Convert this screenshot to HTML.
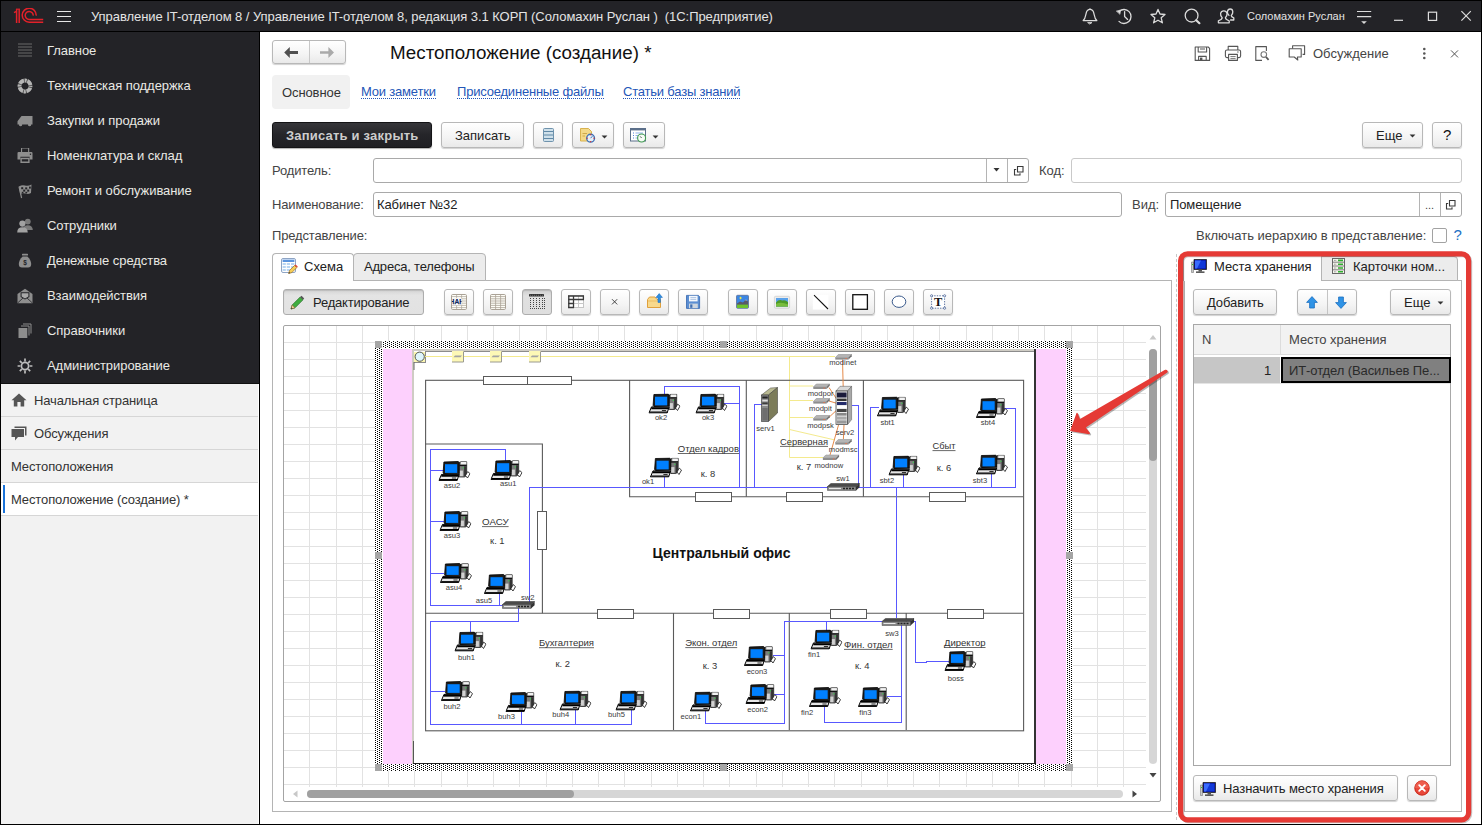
<!DOCTYPE html>
<html><head><meta charset="utf-8">
<style>
*{box-sizing:border-box;margin:0;padding:0}
html,body{width:1482px;height:825px;overflow:hidden;background:#fff}
body{font-family:"Liberation Sans",sans-serif;font-size:13px;color:#333;position:relative}
.a{position:absolute}
.t{position:absolute;white-space:nowrap;line-height:1}
#top{left:0;top:0;width:1482px;height:32px;background:#232327;border-bottom:1px solid #000}
#side{left:0;top:32px;width:260px;height:352px;background:#232327}
#side2{left:0;top:384px;width:258px;height:441px;background:#f2f2f2}
.mi{position:absolute;left:47px;color:#e9e9e4;font-size:13px;white-space:nowrap;line-height:1;letter-spacing:-0.06px}
.pi{position:absolute;left:0;width:258px;height:33px;border-bottom:1px solid #d6d6d6;font-size:13px;color:#333}
.pi span{position:absolute;top:10px;white-space:nowrap;line-height:1;letter-spacing:-0.12px}
.btn{position:absolute;border:1px solid #b8b8b8;border-radius:3px;background:linear-gradient(#ffffff,#f4f4f4 60%,#e9e9e9);box-shadow:0 1px 1px rgba(0,0,0,.18)}
.inp{position:absolute;border:1px solid #a9a9a9;border-radius:3px;background:#fff}
.lbl{position:absolute;font-size:13px;color:#444;white-space:nowrap;line-height:1}
.lnk{position:absolute;font-size:13px;color:#2456b8;white-space:nowrap;line-height:12px;height:13px;border-bottom:1px dotted #2456b8;padding-bottom:0;letter-spacing:-0.2px}
</style></head><body>
<!-- TOPBAR -->
<div id="top" class="a"></div>

<svg class="a" style="left:13px;top:8px" width="32" height="16" viewBox="0 0 32 16">
 <g fill="none" stroke="#e3212a" stroke-width="1.5">
  <path d="M1 4.6 L3.4 3.4 M3.6 1.2 V15 M6.2 1.2 V15"/>
  <path d="M23.2 7.6 A7 7 0 1 0 16.2 14.2 H30.2"/>
  <path d="M20.2 7.6 A4 4 0 1 0 16.2 11.4 H30.2"/>
 </g>
 <path d="M3 1.2 H7" stroke="#e3212a" stroke-width="1.2"/>
</svg>
<div class="a" style="left:57px;top:11px;width:14px;height:1.4px;background:#e6e6e6"></div>
<div class="a" style="left:57px;top:16px;width:14px;height:1.4px;background:#e6e6e6"></div>
<div class="a" style="left:57px;top:21px;width:14px;height:1.4px;background:#e6e6e6"></div>
<div class="t" id="ttl" style="left:91px;top:10px;font-size:13px;color:#e4e4e4;letter-spacing:-0.06px">Управление IT-отделом 8 / Управление IT-отделом 8, редакция 3.1 КОРП (Соломахин Руслан )&nbsp; (1С:Предприятие)</div>
<div class="t" id="usr" style="left:1247px;top:11px;font-size:11px;color:#e4e4e4">Соломахин Руслан</div>

<!-- TOP RIGHT ICONS -->
<svg class="a" style="left:1080px;top:6px" width="160" height="22" viewBox="1080 6 160 22" fill="none" stroke="#dcdcdc" stroke-width="1.3" stroke-linejoin="round" stroke-linecap="round">
<path d="M1083.2 20.6 C1086.4 18 1085.2 12.6 1087.4 10.4 Q1090 8.2 1092.6 10.4 C1094.8 12.6 1093.6 18 1096.8 20.6 Z"/><path d="M1090 8.8 V9.4"/><path d="M1088 22.6 H1092 L1090 23.8 Z" fill="#dcdcdc" stroke-width="0.8"/>
<path d="M1119.2 11.4 A7 7 0 1 1 1119 21.4"/><path d="M1124.6 11.6 V16.6 L1127.6 19.4"/><path d="M1116.6 11 L1120.6 10 L1120 14 Z" fill="#dcdcdc" stroke-width="0.6"/>
<path d="M1158 9.4 L1160 14 L1165 14.5 L1161.2 17.8 L1162.4 22.8 L1158 20.2 L1153.6 22.8 L1154.8 17.8 L1151 14.5 L1156 14 Z"/>
<circle cx="1191.6" cy="15.6" r="6.4"/><path d="M1196.2 20.2 L1199.4 23.2" stroke-width="2.2"/>
<path d="M1229 15.4 Q1227 13.4 1227.4 11.6 Q1228 9 1230.2 9 Q1232.6 9 1232.8 11.8 Q1233 13.6 1231.2 15.6 Q1231.2 17 1233.8 17.8 L1233.8 20 H1230.6"/>
<path d="M1218.4 22.8 V20.8 Q1222.2 19.6 1222.2 17.6 Q1220.2 15.6 1220.6 13.4 Q1221.2 10.8 1223.8 10.8 Q1226.4 10.8 1227 13.4 Q1227.4 15.6 1225.4 17.6 Q1225.4 19.6 1229.2 20.8 V22.8 Z" fill="#232327"/>
</svg>
<svg class="a" style="left:1355px;top:6px" width="120" height="22" viewBox="1355 6 120 22" fill="none" stroke="#dcdcdc" stroke-width="1.2">
<path d="M1357 11.5 H1371.2 M1357 16.6 H1371.2"/><path d="M1361.2 21.2 H1366.8 L1364 24 Z" fill="#dcdcdc" stroke="none"/>
<path d="M1394 20.3 H1403"/>
<rect x="1428.4" y="12.2" width="8.2" height="8.2"/>
<path d="M1461.4 11.2 L1470.8 20.6 M1470.8 11.2 L1461.4 20.6"/>
</svg>
<svg class="a" style="left:1190px;top:42px" width="280" height="22" viewBox="1190 42 280 22" fill="none" stroke="#555" stroke-width="1.1" stroke-linejoin="round">
<path d="M1195.2 47 H1208.2 L1209.6 48.4 V60.4 H1195.2 Z"/><path d="M1198.2 47 V52 H1206.6 V47 M1200 49 H1205 M1198.6 60.4 V56.4 H1206.2 V60.4"/><rect x="1200" y="57.6" width="2.4" height="2.8" fill="#555" stroke="none"/>
<path d="M1228.2 50 V46.4 H1237.8 V50"/><rect x="1225.4" y="50" width="15.2" height="7.6" rx="1.6"/><rect x="1228.6" y="54.4" width="8.8" height="6" fill="#fff"/><path d="M1230.4 56.6 H1235.6 M1230.4 58.6 H1235.6" stroke-width="0.8"/><path d="M1237.2 52 H1238.6" stroke-width="1"/>
<path d="M1266.4 51 V46.6 H1255.8 V60.4 H1262"/><circle cx="1263.8" cy="54.6" r="2.8" stroke="#777"/><path d="M1266 57 L1268.6 59.8" stroke-width="1.8"/>
<path d="M1292.6 48.8 V45.8 H1304.6 V54.4 H1302.6"/><path d="M1289.2 48.8 H1301.2 V57 H1297.4 L1297.8 60 L1294.2 57 H1289.2 Z" fill="#fff"/>
<g fill="#555" stroke="none"><circle cx="1424.3" cy="49" r="1.3"/><circle cx="1424.3" cy="53.5" r="1.3"/><circle cx="1424.3" cy="58" r="1.3"/></g>
<path d="M1451 50.4 L1458 57.4 M1458 50.4 L1451 57.4" stroke-width="1"/>
</svg>
<div class="t" style="left:1313px;top:47px;font-size:13px;color:#444;letter-spacing:0px">Обсуждение</div>
<div id="side" class="a"></div>
<div id="side2" class="a"></div>
<svg class="a" style="left:17px;top:42.5px" width="16" height="16" viewBox="0 0 16 16"><g fill="#7a7a7a"><rect x="1" y="0.6" width="14" height="0.8"/><rect x="1" y="3.6" width="14" height="0.8"/><rect x="1" y="6.6" width="14" height="0.8"/><rect x="1" y="9.6" width="14" height="0.8"/><rect x="1" y="12.6" width="14" height="0.8"/></g></svg>
<div class="mi" style="top:43.5px">Главное</div>
<svg class="a" style="left:17px;top:77.5px" width="16" height="16" viewBox="0 0 16 16"><circle cx="8" cy="8" r="5.5" fill="none" stroke="#4a4a4a" stroke-width="3.8"/><circle cx="8" cy="8" r="5.5" fill="none" stroke="#b4b4b4" stroke-width="3.8" stroke-dasharray="2 0.8 5.04 0.8" stroke-dashoffset="1"/></svg>
<div class="mi" style="top:78.5px">Техническая поддержка</div>
<svg class="a" style="left:17px;top:112.5px" width="16" height="16" viewBox="0 0 16 16"><path d="M4.5 3 H15.5 V11.5 H14.2 A1.6 1.6 0 0 1 11 11.5 H5.2 A1.6 1.6 0 0 1 2 11.5 H0.5 V8.2 Z" fill="#8e8e8e"/><circle cx="3.6" cy="12" r="1.2" fill="#8e8e8e"/><circle cx="12.6" cy="12" r="1.2" fill="#8e8e8e"/></svg>
<div class="mi" style="top:113.5px">Закупки и продажи</div>
<svg class="a" style="left:17px;top:147.5px" width="16" height="16" viewBox="0 0 16 16"><path d="M4 -0.5 H12.2 V4 H4 Z M5.1 0.6 V4 H11.1 V0.6 Z" fill="#8e8e8e" fill-rule="evenodd"/><path d="M1.6 4 H14.4 A1.1 1.1 0 0 1 15.5 5.1 V11.4 H12.6 V8.8 H3.4 V11.4 H0.5 V5.1 A1.1 1.1 0 0 1 1.6 4 Z" fill="#8e8e8e"/><rect x="12.8" y="5.6" width="1.3" height="1.3" fill="#232327"/><path d="M3.4 9.8 H12.6 V15 H3.4 Z M4.8 11.2 V13.6 H11.2 V11.2 Z" fill="#8e8e8e" fill-rule="evenodd"/></svg>
<div class="mi" style="top:148.5px">Номенклатура и склад</div>
<svg class="a" style="left:17px;top:182.5px" width="16" height="16" viewBox="0 0 16 16"><path d="M2 3.5 Q5 1.5 8 2.5 T14.5 1.5 L14 10 Q11 11.5 8 10.5 T3.2 11.5 Z" fill="#8e8e8e"/><path d="M2 3.5 L4.6 15" stroke="#8e8e8e" stroke-width="1.2" fill="none"/><g fill="#232327"><rect x="4.2" y="4.2" width="2" height="2"/><rect x="8.2" y="4.4" width="2" height="2"/><rect x="12" y="3.6" width="1.8" height="2"/><rect x="6.2" y="6.6" width="2" height="2"/><rect x="10.2" y="6.6" width="2" height="2"/><rect x="4.8" y="8.8" width="1.6" height="1.6"/><rect x="8.4" y="8.8" width="1.8" height="1.6"/></g></svg>
<div class="mi" style="top:183.5px">Ремонт и обслуживание</div>
<svg class="a" style="left:17px;top:217.5px" width="16" height="16" viewBox="0 0 16 16"><circle cx="10.8" cy="3.6" r="2.9" fill="#7a7a7a"/><path d="M6 12 Q6 7.2 10.8 7.2 T15.8 12 Z" fill="#7a7a7a"/><circle cx="5.4" cy="5.6" r="3.1" fill="#a2a2a2"/><path d="M0.2 14.5 Q0.2 9.2 5.4 9.2 T10.8 14.5 Z" fill="#a2a2a2"/></svg>
<div class="mi" style="top:218.5px">Сотрудники</div>
<svg class="a" style="left:17px;top:252.5px" width="16" height="16" viewBox="0 0 16 16"><rect x="5" y="0.8" width="6" height="1.8" rx="0.6" fill="#8e8e8e"/><path d="M5.6 3.4 H10.4 Q14.2 7 14.2 11 Q14.2 14.6 11 14.6 H5 Q1.8 14.6 1.8 11 Q1.8 7 5.6 3.4 Z" fill="#8e8e8e"/><text x="8" y="12.2" font-size="6.5" font-weight="bold" text-anchor="middle" fill="#232327" font-family="Liberation Sans">$</text></svg>
<div class="mi" style="top:253.5px">Денежные средства</div>
<svg class="a" style="left:17px;top:287.5px" width="16" height="16" viewBox="0 0 16 16"><path d="M0.5 6 L8 0.8 L15.5 6 V15.2 H0.5 Z" fill="#8e8e8e"/><path d="M3.6 4.2 H12.4 V9 L8 11.6 L3.6 9 Z" fill="#232327"/><path d="M4.6 5.2 H11.4 V8.4 L8 10.4 L4.6 8.4 Z" fill="#a8a8a8"/><path d="M0.8 14.8 L6 10 M15.2 14.8 L10 10" stroke="#232327" stroke-width="0.8"/></svg>
<div class="mi" style="top:288.5px">Взаимодействия</div>
<svg class="a" style="left:17px;top:322.5px" width="16" height="16" viewBox="0 0 16 16"><path d="M6 1 H14 V10.5 M4 3 H12 V12.5" fill="none" stroke="#8e8e8e" stroke-width="1"/><rect x="1.5" y="5" width="8.8" height="10" fill="#8e8e8e"/></svg>
<div class="mi" style="top:323.5px">Справочники</div>
<svg class="a" style="left:17px;top:357.5px" width="16" height="16" viewBox="0 0 16 16"><g stroke="#bdbdbd" stroke-width="1.7" fill="none"><circle cx="8" cy="8" r="3.6"/><path d="M8 0.6 V3.4 M8 12.6 V15.4 M0.6 8 H3.4 M12.6 8 H15.4 M2.8 2.8 L4.8 4.8 M11.2 11.2 L13.2 13.2 M2.8 13.2 L4.8 11.2 M11.2 4.8 L13.2 2.8"/></g></svg>
<div class="mi" style="top:358.5px">Администрирование</div>
<div class="pi" style="top:384px"><svg class="a" style="left:11px;top:9px" width="16" height="14" viewBox="0 0 16 14"><path d="M8 0.5 L15.5 7.2 H13.2 V13.5 H9.6 V9 H6.4 V13.5 H2.8 V7.2 H0.5 Z" fill="#555"/></svg><span style="left:34px">Начальная страница</span></div>
<div class="pi" style="top:417px"><svg class="a" style="left:11px;top:9px" width="16" height="15" viewBox="0 0 16 15"><path d="M3.5 0.5 H15.5 V9.5 H14 V2 H3.5 Z" fill="#555"/><path d="M0.5 3 H13 V11 H7 L4 14.5 V11 H0.5 Z" fill="#555"/></svg><span style="left:34px">Обсуждения</span></div>
<div class="pi" style="top:450px"><span style="left:11px">Местоположения</span></div>
<div class="pi" style="top:483px;background:#fff"><div class="a" style="left:3px;top:2px;width:2px;height:28px;background:#1a73d9"></div><span style="left:11px">Местоположение (создание) *</span></div>

<!-- HEADER -->
<div class="btn" style="left:272px;top:40px;width:74px;height:24px"></div>
<div class="a" style="left:309px;top:41px;width:1px;height:22px;background:#c8c8c8"></div>
<svg class="a" style="left:284px;top:46px" width="15" height="13" viewBox="0 0 15 13"><path d="M0.2 6.5 L5.8 1.1 V5.1 H14 V7.9 H5.8 V11.9 Z" fill="#505050"/></svg>
<svg class="a" style="left:320px;top:46px" width="15" height="13" viewBox="0 0 15 13"><path d="M14 6.5 L8.4 1.1 V5.3 H0 V7.7 H8.4 V11.9 Z" fill="#aaaaaa"/></svg>
<div class="t" id="h1" style="left:390px;top:44px;font-size:18.8px;color:#111">Местоположение (создание) *</div>
<div class="a" style="left:272px;top:75px;width:78px;height:34px;background:#f1f1f1;border-radius:4px"></div>
<div class="t" style="left:282px;top:86px;font-size:13px;color:#333;letter-spacing:-0.1px">Основное</div>
<div class="lnk" style="left:361px;top:86px">Мои заметки</div>
<div class="lnk" style="left:457px;top:86px">Присоединенные файлы</div>
<div class="lnk" style="left:623px;top:86px">Статьи базы знаний</div>
<!-- cmd bar -->
<div class="a" style="left:272px;top:122px;width:160px;height:26px;border-radius:3px;background:linear-gradient(#36363a,#252529 50%,#1f1f23);border:1px solid #141416;box-shadow:0 1px 1px rgba(0,0,0,.3)"></div>
<div class="t" style="left:286px;top:129px;font-size:13px;font-weight:bold;color:#cdcdcd;letter-spacing:0.2px">Записать и закрыть</div>
<div class="btn" style="left:441px;top:122px;width:83px;height:26px"></div>
<div class="t" style="left:455px;top:129px;font-size:13px;color:#222">Записать</div>
<div class="btn" style="left:533px;top:122px;width:30px;height:26px"></div>
<svg class="a" style="left:543px;top:128px" width="11" height="14" viewBox="0 0 11 14"><rect x="0.5" y="0.5" width="10" height="13" rx="1" fill="#cfe0ea" stroke="#6f93ad"/><path d="M1 3.5 H10 M1 7 H10 M1 10.5 H10" stroke="#5f88a6" stroke-width="1.2"/></svg>
<div class="btn" style="left:572px;top:122px;width:42px;height:26px"></div>
<svg class="a" style="left:579px;top:127px" width="17" height="16" viewBox="0 0 17 16"><path d="M1.5 1.5 H9.5 L12.5 4.5 V14 H1.5 Z" fill="#f3d989" stroke="#d8b24f"/><path d="M3.5 6.5 H8 M3.5 9 H6" stroke="#cfa94a" stroke-width="1"/><circle cx="11.6" cy="11.2" r="3.9" fill="#e8f0f8" stroke="#3f73b8" stroke-width="1.4"/><path d="M11.6 11.2 L13.4 9.2" stroke="#3f73b8" stroke-width="1"/><g fill="#e8241c"><rect x="11.1" y="7.2" width="1.1" height="1.1"/><rect x="11.1" y="14.1" width="1.1" height="1.1"/><rect x="7.6" y="10.7" width="1.1" height="1.1"/><rect x="14.5" y="10.7" width="1.1" height="1.1"/></g></svg>
<svg class="a" style="left:601px;top:135px" width="7" height="4" viewBox="0 0 7 4"><path d="M0.6 0.4 H6.4 L3.5 3.4 Z" fill="#333"/></svg>
<div class="btn" style="left:623px;top:122px;width:42px;height:26px"></div>
<svg class="a" style="left:629px;top:127px" width="19" height="16" viewBox="0 0 19 16"><rect x="1.5" y="1.5" width="15" height="12.5" fill="#fff" stroke="#5b6f8a"/><rect x="1" y="1" width="16" height="2.4" fill="#5b6f8a"/><path d="M4 6 H5 M4 8.5 H5 M4 11 H5" stroke="#4f81d6" stroke-width="1"/><path d="M6.5 6 H14 M6.5 8.5 H12 M6.5 11 H10" stroke="#8fb2ea" stroke-width="1"/><circle cx="12.6" cy="11" r="4" fill="#f6fcf6" stroke="#3f9a4f" stroke-width="1.1"/><path d="M12.6 11 L11.2 9.4" stroke="#555" stroke-width="1"/></svg>
<svg class="a" style="left:652px;top:135px" width="7" height="4" viewBox="0 0 7 4"><path d="M0.6 0.4 H6.4 L3.5 3.4 Z" fill="#333"/></svg>
<div class="btn" style="left:1362px;top:122px;width:61px;height:26px"></div>
<div class="t" style="left:1376px;top:129px;font-size:13px;color:#222">Еще</div>
<svg class="a" style="left:1409px;top:134px" width="7" height="4" viewBox="0 0 7 4"><path d="M0.6 0.4 H6.4 L3.5 3.4 Z" fill="#333"/></svg>
<div class="btn" style="left:1432px;top:122px;width:30px;height:26px"></div>
<div class="t" style="left:1443px;top:127px;font-size:15px;color:#111">?</div>
<!-- FORM -->
<div class="lbl" style="left:272px;top:164px;letter-spacing:-0.15px">Родитель:</div>
<div class="inp" style="left:373px;top:158px;width:656px;height:25px"></div>
<div class="a" style="left:986px;top:159px;width:1px;height:23px;background:#b4b4b4"></div>
<div class="a" style="left:1007px;top:159px;width:1px;height:23px;background:#b4b4b4"></div>
<svg class="a" style="left:993px;top:168px" width="7" height="4" viewBox="0 0 7 4"><path d="M0.5 0 H6.5 L3.5 3.4 Z" fill="#333"/></svg>
<svg class="a open" style="left:1013px;top:165px" width="11" height="11" viewBox="0 0 11 11"><path d="M4.5 1.5 H10 V7 H4.5 Z M3.2 4.5 H1.5 V10 H7 V8.3" fill="none" stroke="#3a3a3a" stroke-width="1.1"/></svg>
<div class="lbl" style="left:1039px;top:164px">Код:</div>
<div class="inp" style="left:1071px;top:158px;width:391px;height:25px;border-color:#c9c9c9"></div>
<div class="lbl" style="left:272px;top:198px;letter-spacing:-0.15px">Наименование:</div>
<div class="inp" style="left:373px;top:192px;width:749px;height:25px"></div>
<div class="t" style="left:377px;top:198px;font-size:13px;color:#222;letter-spacing:-0.1px">Кабинет №32</div>
<div class="lbl" style="left:1132px;top:198px">Вид:</div>
<div class="inp" style="left:1165px;top:192px;width:297px;height:25px"></div>
<div class="t" style="left:1170px;top:198px;font-size:13px;color:#222;letter-spacing:-0.1px">Помещение</div>
<div class="a" style="left:1419px;top:193px;width:1px;height:23px;background:#b4b4b4"></div>
<div class="a" style="left:1440px;top:193px;width:1px;height:23px;background:#b4b4b4"></div>
<div class="t" style="left:1425px;top:200px;font-size:11px;color:#444">...</div>
<svg class="a open" style="left:1445px;top:199px" width="11" height="11" viewBox="0 0 11 11"><path d="M4.5 1.5 H10 V7 H4.5 Z M3.2 4.5 H1.5 V10 H7 V8.3" fill="none" stroke="#3a3a3a" stroke-width="1.1"/></svg>
<div class="lbl" style="left:272px;top:229px;letter-spacing:-0.15px">Представление:</div>
<div class="lbl" style="left:1196px;top:229px">Включать иерархию в представление:</div>
<div class="a" style="left:1432px;top:228px;width:15px;height:15px;border:1px solid #a2a2a2;border-radius:2px;background:#fff"></div>
<div class="t" style="left:1453.5px;top:227px;font-size:15px;color:#1c6fc4">?</div>

<!-- TABS -->
<div class="a" style="left:272px;top:280px;width:900px;height:532px;border:1px solid #b4b4b4;background:#fff"></div>
<div class="a" style="left:353px;top:253px;width:133px;height:28px;border:1px solid #b4b4b4;border-radius:4px 4px 0 0;background:#ececec"></div>
<div class="a" style="left:272px;top:253px;width:82px;height:28px;border:1px solid #b4b4b4;border-bottom:none;border-radius:4px 4px 0 0;background:#fff"></div>
<svg class="a" style="left:281px;top:258px" width="17" height="16" viewBox="0 0 17 16"><rect x="0.5" y="0.5" width="14" height="14" rx="1.5" fill="#fff" stroke="#8ea4c4"/><rect x="1.6" y="1.6" width="11.8" height="2.4" fill="#5a94de"/><g fill="#b9d6f3"><rect x="1.6" y="5" width="3.2" height="2"/><rect x="5.8" y="5" width="3.2" height="2"/><rect x="10" y="5" width="3.4" height="2"/><rect x="1.6" y="8" width="3.2" height="2"/><rect x="5.8" y="8" width="3.2" height="2"/><rect x="10" y="8" width="3.4" height="2"/><rect x="1.6" y="11" width="3.2" height="2"/><rect x="5.8" y="11" width="3.2" height="2"/></g><path d="M7.6 15.6 L8.6 12.4 L13.6 7.4 L15.8 9.6 L10.8 14.6 Z" fill="#f6cf58" stroke="#9a6a1e" stroke-width="0.7"/><path d="M13.6 7.4 L14.6 6.4 L16.8 8.6 L15.8 9.6 Z" fill="#e2443a"/><path d="M7.6 15.6 L8.1 14 L9.2 15.1 Z" fill="#333"/></svg>
<div class="t" style="left:304px;top:260px;font-size:13px;color:#222">Схема</div>
<div class="t" style="left:364px;top:260px;font-size:13px;color:#222;letter-spacing:-0.2px">Адреса, телефоны</div>
<div class="btn" style="left:283px;top:289px;width:141px;height:26px;background:linear-gradient(#d4d4d4,#e4e4e4 22%,#e2e2e2);box-shadow:inset 0 1px 1px rgba(0,0,0,.12);border-color:#adadad"></div>
<svg class="a" style="left:290px;top:295px" width="15" height="15" viewBox="0 0 15 15"><path d="M1 14 L2.2 10 L10.2 2 L13 4.8 L5 12.8 Z" fill="#3fae3f" stroke="#2a6f2a" stroke-width="0.7"/><path d="M10.2 2 L11.6 0.8 L14.2 3.4 L13 4.8 Z" fill="#555"/><path d="M1 14 L2.2 10 L5 12.8 Z" fill="#f2d2a0" stroke="#8a5a2a" stroke-width="0.6"/><path d="M1 14 L1.5 12.4 L2.6 13.5 Z" fill="#333"/></svg>
<div class="t" style="left:313px;top:296px;font-size:13px;color:#222;letter-spacing:-0.2px">Редактирование</div>
<div class="btn" style="left:444px;top:289px;width:30px;height:26px;"></div>
<div class="btn" style="left:483px;top:289px;width:30px;height:26px;"></div>
<div class="btn" style="left:522px;top:289px;width:30px;height:26px;background:linear-gradient(#cfcfcf,#e0e0e0 25%,#dedede);box-shadow:inset 0 1px 1px rgba(0,0,0,.12);border-color:#adadad;"></div>
<div class="btn" style="left:561px;top:289px;width:30px;height:26px;"></div>
<div class="btn" style="left:600px;top:289px;width:30px;height:26px;"></div>
<div class="btn" style="left:639px;top:289px;width:30px;height:26px;"></div>
<div class="btn" style="left:678px;top:289px;width:30px;height:26px;"></div>
<div class="btn" style="left:728px;top:289px;width:30px;height:26px;"></div>
<div class="btn" style="left:767px;top:289px;width:30px;height:26px;"></div>
<div class="btn" style="left:806px;top:289px;width:30px;height:26px;"></div>
<div class="btn" style="left:845px;top:289px;width:30px;height:26px;"></div>
<div class="btn" style="left:884px;top:289px;width:30px;height:26px;"></div>
<div class="btn" style="left:923px;top:289px;width:30px;height:26px;"></div>
<svg class="a" style="left:440px;top:286px" width="520" height="32" viewBox="440 286 520 32">
<!-- 1 -->
<rect x="451.5" y="294.5" width="15" height="15" rx="1.2" fill="#fffef8" stroke="#aaa296"/>
<path d="M452 296.6 H466 M452 298.8 H466 M452 301 H466 M452 303.2 H466 M452 305.4 H466 M452 307.6 H466 M456.6 295 V309 M461.6 295 V309" stroke="#aaa296" stroke-width="0.7" fill="none"/>
<rect x="452" y="298.2" width="9.6" height="7" fill="#fff"/>
<clipPath id="cpH"><rect x="452" y="297" width="9.4" height="9"/></clipPath><text x="449.6" y="304.4" font-size="7.6" font-weight="bold" fill="#10285e" stroke="#10285e" stroke-width="0.25" font-family="Liberation Sans" clip-path="url(#cpH)" textLength="14.4" lengthAdjust="spacingAndGlyphs">НАН</text>
<rect x="461.6" y="297" width="6" height="10" fill="#fffef8" opacity="0"/>
<!-- 2 -->
<rect x="490.5" y="294.5" width="15" height="15" rx="1.2" fill="#fffef8" stroke="#aaa296"/>
<path d="M491 296.6 H505 M491 298.8 H505 M491 301 H505 M491 303.2 H505 M491 305.4 H505 M491 307.6 H505 M495.6 295 V309 M500.6 295 V309" stroke="#aaa296" stroke-width="0.8" fill="none"/>
<!-- 3 -->
<rect x="529" y="294" width="15" height="2.6" rx="0.6" fill="#333"/><path d="M530 295.3 H543" stroke="#999" stroke-width="0.6" stroke-dasharray="1 1"/>
<g fill="#444" shape-rendering="crispEdges"><path d="M530 298 h1 v1 h-1z m3 0 h1 v1 h-1z m3 0 h1 v1 h-1z m3 0 h1 v1 h-1z m3 0 h1 v1 h-1z m2 0 h1 v1 h-1z"/><path d="M530 300 h1 v1 h-1z m3 0 h1 v1 h-1z m3 0 h1 v1 h-1z m3 0 h1 v1 h-1z m3 0 h1 v1 h-1z m2 0 h1 v1 h-1z"/><path d="M530 302 h1 v1 h-1z m3 0 h1 v1 h-1z m3 0 h1 v1 h-1z m3 0 h1 v1 h-1z m3 0 h1 v1 h-1z m2 0 h1 v1 h-1z"/><path d="M530 304 h1 v1 h-1z m3 0 h1 v1 h-1z m3 0 h1 v1 h-1z m3 0 h1 v1 h-1z m3 0 h1 v1 h-1z m2 0 h1 v1 h-1z"/><path d="M530 306 h1 v1 h-1z m3 0 h1 v1 h-1z m3 0 h1 v1 h-1z m3 0 h1 v1 h-1z m3 0 h1 v1 h-1z m2 0 h1 v1 h-1z"/><path d="M530 308 h1 v1 h-1z m2 0 h1 v1 h-1z m2 0 h1 v1 h-1z m2 0 h1 v1 h-1z m2 0 h1 v1 h-1z m2 0 h1 v1 h-1z m2 0 h1 v1 h-1z m2 0 h1 v1 h-1z"/></g>
<!-- 4 -->
<rect x="568.5" y="295.5" width="15" height="12" fill="#fff" stroke="#c4c4c4"/>
<path d="M573.5 299 V307.5 M578.5 296 V307.5 M569 303.5 H583.5" stroke="#c8c8c8" stroke-width="1"/>
<path d="M568 296 H584 M568.8 295.5 V307.8 M568 299.5 H584 M573.5 296 V299.5 M583.4 295.5 V299.5 M568 303.5 H573.5 M573.5 299.5 V307.8 M568 307.5 H574" stroke="#3a3a3a" stroke-width="1.3" fill="none"/>
<!-- 5 x -->
<path d="M612 299.2 L617.2 304.4 M617.2 299.2 L612 304.4" stroke="#333" stroke-width="0.9"/>
<!-- 6 folder -->
<path d="M647.5 299.5 L649.5 297 H655 L657 299.5 H660.5 V307.5 H647.5 Z" fill="#f8d98c" stroke="#e0a03c" stroke-width="1" stroke-linejoin="round"/>
<path d="M648 301 H660" stroke="#e8b658" stroke-width="0.8"/>
<path d="M659.2 293.6 L662.4 297.4 H660.4 V302.4 H658 V297.4 H656 Z" fill="#2f8fe0" stroke="#1b6cc0" stroke-width="0.6" stroke-linejoin="round"/>
<!-- 7 floppy -->
<path d="M686.5 295.4 H698.4 L699.6 296.6 V308.4 H686.5 Z" fill="#5b8ed2" stroke="#3f6fb4" stroke-width="0.9"/>
<rect x="689" y="295.8" width="8.6" height="5.6" fill="#f4f8fd"/><path d="M690.4 297.6 H696.2 M690.4 299.4 H696.2" stroke="#9bb6dc" stroke-width="0.8"/>
<rect x="689" y="303.6" width="8.8" height="4.6" fill="#cdd6df"/><rect x="690.2" y="304.4" width="2.2" height="3.4" fill="#3f6fb4"/>
<!-- 8 picture -->
<rect x="736.5" y="295.3" width="12" height="13" rx="1" fill="#3b86e4" stroke="#5a6f96" stroke-width="0.8"/>
<path d="M737 303.5 L740 301.5 L743 302.6 L746 299.4 L748 301.4 V305 H737 Z" fill="#58586a"/><path d="M745.2 300.2 L746 299.4 L747 300.4 Z" fill="#fff"/>
<rect x="737" y="304.6" width="11" height="3.4" fill="#6cc22e"/>
<path d="M740.6 296.2 L741.1 297.5 L742.4 298 L741.1 298.5 L740.6 299.8 L740.1 298.5 L738.8 298 L740.1 297.5 Z" fill="#fff23a"/>
<!-- 9 picture wide -->
<rect x="774.4" y="296.3" width="15.2" height="12" rx="1.2" fill="#ececec" stroke="#d0d0d0" stroke-width="0.8"/>
<rect x="776" y="298" width="12" height="8.6" fill="#5aa2ea"/>
<path d="M776 302.4 Q779 299 782.4 300.6 Q785 299.4 788 302 V306.6 H776 Z" fill="#4c9a28"/><path d="M776 304 Q781 301.4 788 304.4 V306.6 H776 Z" fill="#78bc3c"/>
<!-- 10 line -->
<rect x="812.8" y="295" width="15.6" height="14.6" fill="#fff"/>
<path d="M814 295.2 L828 309" stroke="#111" stroke-width="1.1"/>
<!-- 11 square -->
<rect x="852.8" y="294.7" width="14.6" height="14.6" fill="#fff" stroke="#111" stroke-width="1.3"/>
<!-- 12 ellipse -->
<ellipse cx="899" cy="301.7" rx="6.8" ry="5.7" fill="#fff" stroke="#3a5a8c" stroke-width="1"/>
<!-- 13 T -->
<rect x="931.6" y="295.8" width="13" height="12.4" fill="#fff" stroke="#3a568e" stroke-width="0.8" stroke-dasharray="1.4 1.2"/>
<g fill="#fff" stroke="#3a568e" stroke-width="0.7"><circle cx="931.6" cy="295.8" r="1.1"/><circle cx="944.6" cy="295.8" r="1.1"/><circle cx="931.6" cy="308.2" r="1.1"/><circle cx="944.6" cy="308.2" r="1.1"/></g>
<text x="938.1" y="306.4" font-size="12.5" font-weight="bold" text-anchor="middle" fill="#111" font-family="Liberation Serif">T</text>
</svg>
<!-- SHEET -->
<div class="a" style="left:283px;top:325px;width:878px;height:477px;border:1px solid #a4a4a4;border-radius:2px;background:#fff"></div>
<svg class="a" style="left:0;top:0" width="1482" height="825" viewBox="0 0 1482 825">
<defs>
<pattern id="chk" width="4" height="2" patternUnits="userSpaceOnUse"><rect width="4" height="2" fill="#fff"/><rect x="1" y="1" width="1" height="1" fill="#000"/><rect x="3" y="0" width="1" height="1" fill="#000"/></pattern>
<symbol id="pc" viewBox="0 0 32 20">
<path d="M20.8 1.4 L22.4 0.8 H28.2 V14.6 L25.8 16 H20.8 Z" fill="#7c7c7c" stroke="#111" stroke-width="0.7"/>
<path d="M22.3 1.1 H27.9 V3.6 H22.3 Z" fill="#f2f2f2"/>
<rect x="21" y="3.8" width="7.1" height="1.3" fill="#111"/>
<rect x="21.2" y="9.6" width="3.2" height="5.6" fill="#d2d2d2"/>
<path d="M25.6 5.3 H28 V14.4 L25.6 15.8 Z" fill="#333"/>
<rect x="24.3" y="6.2" width="1.2" height="1.2" fill="#35d04a"/>
<path d="M5.4 1 L19.6 0.5 L20.6 1.4 V12.6 L5.6 13 L4.6 12 Z" fill="#1c1c1c" stroke="#000" stroke-width="0.8"/>
<rect x="6.5" y="3.2" width="12.2" height="8.7" fill="#0080ff"/>
<path d="M3 13.4 H20.6 L18.6 19.6 H0.4 Z" fill="#e6e6e6" stroke="#000" stroke-width="1"/>
<path d="M2.8 14.7 H20.2" stroke="#000" stroke-width="1.9"/>
<path d="M1.2 18.7 H18.8" stroke="#000" stroke-width="1.2"/>
<path d="M13.4 17 H17.6" stroke="#000" stroke-width="0.8"/>
<path d="M27 14.6 L29.2 10.6 L31.5 12.6 L29 17 Z" fill="#fff" stroke="#111" stroke-width="0.8"/>
</symbol>
<symbol id="mdm" viewBox="0 0 17 6"><path d="M3.5 0.3 H16.7 L13.5 3.6 H0.3 Z" fill="#b4b4b4" stroke="#8a8a8a" stroke-width="0.5"/><path d="M0.3 3.6 H13.5 V5.6 H0.3 Z" fill="#8e8e8e"/><path d="M13.5 3.6 L16.7 0.3 V2.2 L13.5 5.6 Z" fill="#6e6e6e"/><rect x="10.5" y="4.1" width="1.2" height="0.9" fill="#ff6a3a"/></symbol>
<symbol id="sw" viewBox="0 0 33 8"><path d="M4 0.4 H32.6 L29 3.6 H0.4 Z" fill="#4a4a4a" stroke="#222" stroke-width="0.5"/><path d="M0.4 3.6 H29 V7.4 H0.4 Z" fill="#8a8a8a" stroke="#333" stroke-width="0.5"/><path d="M29 3.6 L32.6 0.4 V4.2 L29 7.4 Z" fill="#333"/><path d="M2 5.5 H14" stroke="#e8e8e8" stroke-width="1.2"/><path d="M16 5.5 H27" stroke="#222" stroke-width="1.6" stroke-dasharray="2 1"/></symbol>
</defs>
<path d="M309.5 326 V787 M336.5 326 V787 M362.5 326 V787 M388.5 326 V787 M414.5 326 V787 M441.5 326 V787 M467.5 326 V787 M493.5 326 V787 M519.5 326 V787 M546.5 326 V787 M572.5 326 V787 M598.5 326 V787 M624.5 326 V787 M651.5 326 V787 M677.5 326 V787 M703.5 326 V787 M729.5 326 V787 M756.5 326 V787 M782.5 326 V787 M808.5 326 V787 M834.5 326 V787 M861.5 326 V787 M887.5 326 V787 M913.5 326 V787 M939.5 326 V787 M966.5 326 V787 M992.5 326 V787 M1018.5 326 V787 M1044.5 326 V787 M1071.5 326 V787 M1097.5 326 V787 M1123.5 326 V787 M284 342.5 H1146 M284 359.5 H1146 M284 376.5 H1146 M284 393.5 H1146 M284 410.5 H1146 M284 427.5 H1146 M284 444.5 H1146 M284 461.5 H1146 M284 478.5 H1146 M284 495.5 H1146 M284 512.5 H1146 M284 529.5 H1146 M284 546.5 H1146 M284 563.5 H1146 M284 580.5 H1146 M284 597.5 H1146 M284 614.5 H1146 M284 631.5 H1146 M284 648.5 H1146 M284 665.5 H1146 M284 682.5 H1146 M284 699.5 H1146 M284 716.5 H1146 M284 733.5 H1146 M284 750.5 H1146 M284 767.5 H1146 M284 784.5 H1146" stroke="#e2e2e2" stroke-width="1" fill="none" shape-rendering="crispEdges"/>
<rect x="375" y="341" width="698" height="430" fill="url(#chk)" shape-rendering="crispEdges"/>
<rect x="382" y="348" width="684" height="416" fill="#fff" shape-rendering="crispEdges"/>
<rect x="383" y="349" width="683" height="415" fill="#fdd0fd" shape-rendering="crispEdges"/>
<rect x="412" y="349" width="624" height="415" fill="#fff" shape-rendering="crispEdges"/>
<g shape-rendering="crispEdges" fill="none">
<path d="M413 349 V764" stroke="#cfccc4" stroke-width="2"/>
<path d="M412 350 H1034" stroke="#cfccc4" stroke-width="2"/>
<path d="M413.5 741 V763" stroke="#555"/>
<path d="M425 351.5 H1034 M425.5 351 V362 M414 362.5 H426" stroke="#8c8c8c"/>
<path d="M1035 349 V764" stroke="#333" stroke-width="2"/>
<path d="M413 763.5 H1036" stroke="#222"/>
</g>
<rect x="375" y="341" width="7" height="7" fill="#a6a6a6"/>
<rect x="720" y="341" width="7" height="7" fill="#a6a6a6"/>
<rect x="1066" y="341" width="7" height="7" fill="#a6a6a6"/>
<rect x="375" y="552" width="7" height="7" fill="#a6a6a6"/>
<rect x="1066" y="552" width="7" height="7" fill="#a6a6a6"/>
<rect x="375" y="764" width="7" height="7" fill="#a6a6a6"/>
<rect x="720" y="764" width="7" height="7" fill="#a6a6a6"/>
<rect x="1066" y="764" width="7" height="7" fill="#a6a6a6"/>
<g stroke="#f4ea8e" stroke-width="1" fill="none">
<path d="M424 356.5 H835"/>
<path d="M789.5 356 V457.5 H823 M789.5 386 H813 M789.5 400.5 H813 M789.5 417.5 H813 M789.5 429.5 L835 440"/>
</g>
<rect x="452" y="351" width="11.5" height="11" fill="#fdf8b6"/><path d="M452 362 H463.5 V352" stroke="#9a9a90" stroke-width="1" fill="none"/><path d="M453.5 357.2 L455 355.6 H462 L460.5 357.2 Z" fill="#a4a4a4"/>
<rect x="490" y="351" width="11.5" height="11" fill="#fdf8b6"/><path d="M490 362 H501.5 V352" stroke="#9a9a90" stroke-width="1" fill="none"/><path d="M491.5 357.2 L493 355.6 H500 L498.5 357.2 Z" fill="#a4a4a4"/>
<rect x="529" y="351" width="11.5" height="11" fill="#fdf8b6"/><path d="M529 362 H540.5 V352" stroke="#9a9a90" stroke-width="1" fill="none"/><path d="M530.5 357.2 L532 355.6 H539 L537.5 357.2 Z" fill="#a4a4a4"/>
<rect x="414" y="352" width="11" height="10" fill="#fbf6b0"/><circle cx="419.7" cy="356.7" r="4.6" fill="#dff6fb" stroke="#444" stroke-width="0.9"/>
<path d="M414 362 V370" stroke="#666" stroke-width="1"/>
<g stroke="#5a5a5a" stroke-width="1.1" fill="none">
<rect x="425.6" y="380.3" width="598" height="350.5"/>
<path d="M425 444 H542.4 V613.3"/>
<path d="M425 613.3 H1023"/>
<path d="M629.6 380 V496.8 H1023"/>
<path d="M746.3 380 V496.8 M863.4 380 V496.8"/>
<path d="M673.5 613 V730 M789.3 613 V730 M906.2 613 V730"/>
</g>
<g stroke="#5a5a5a" stroke-width="1" fill="#fff">
<rect x="483.5" y="376.5" width="44" height="8"/>
<rect x="527.5" y="376.5" width="44" height="8"/>
<rect x="695.5" y="492.5" width="36" height="9"/>
<rect x="786.5" y="492.5" width="36" height="9"/>
<rect x="929.5" y="492.5" width="36" height="9"/>
<rect x="537.5" y="511.5" width="9" height="38"/>
<rect x="597.5" y="609.5" width="36" height="9"/>
<rect x="713.5" y="609.5" width="36" height="9"/>
<rect x="830.5" y="609.5" width="36" height="9"/>
<rect x="947.5" y="609.5" width="36" height="9"/>
</g>
<g stroke="#5858ff" stroke-width="1" fill="none" shape-rendering="crispEdges">
<path d="M505.5 461 V449.5 H430.5 V605.5 H503"/>
<path d="M430 470.5 H444 M430 521.5 H444 M430 573.5 H444"/>
<path d="M499.5 593 V605"/>
<path d="M529.5 602 V487.5 H1015.5 V408.5 H1004"/>
<path d="M664.5 394 V386.5 H739.5 V487 M717 403.5 H739 M664.5 477 V487"/>
<path d="M762 404.5 H754.5 V487 M852 405.5 H858.5 V487"/>
<path d="M879 407.5 H870.5 V487 M903.5 475 V487 M991.5 474 V487"/>
<path d="M896.5 487 V618"/>
<path d="M518.5 608 V621.5 H430.5 V724.5 H631.5 V710 M470.5 621 V632 M430 691.5 H445 M521.5 711 V724 M575.5 710 V724"/>
<path d="M705.5 710 V723.5 H784.5 V621.5 H882 M773 655.5 H784 M774 694.5 H784"/>
<path d="M826.5 621 V631 M824.5 707 V722.5 H901.5 V625 M887 696.5 H901"/>
<path d="M910 621.5 H915.5 V662.5 H926 V661.5 H949"/>
</g>
<g stroke="#e58a4a" stroke-width="1" fill="none">
<path d="M842.5 359.5 L843.2 387 M829 387.5 L837 399.5 M829 401 L837 403.4 M829 417.3 L837 409.8 M838.5 425 L830 455 M844 425 L843.4 439"/>
</g>
<use href="#mdm" x="835" y="354" width="17" height="6"/>
<use href="#mdm" x="813" y="383.5" width="17" height="6"/>
<use href="#mdm" x="813" y="398" width="17" height="6"/>
<use href="#mdm" x="813" y="415" width="17" height="6"/>
<use href="#mdm" x="835" y="439" width="17" height="6"/>
<use href="#mdm" x="822.5" y="454.5" width="17" height="6"/>
<use href="#sw" x="827" y="483" width="33" height="8"/>
<use href="#sw" x="502" y="601" width="33" height="8"/>
<use href="#sw" x="881.5" y="618" width="33" height="8"/>
<g><path d="M761.5 395 L770.5 388 L777.5 387.5 L768.5 395 Z" fill="#b8b890" stroke="#444" stroke-width="0.5"/><path d="M768.5 395 L777.5 387.5 V413 L768.5 421.5 Z" fill="#7c7c5a" stroke="#333" stroke-width="0.5"/><rect x="761.5" y="395" width="7" height="26.5" fill="#8a8a8a" stroke="#333" stroke-width="0.6"/><rect x="762.3" y="396.5" width="5.4" height="2" fill="#222"/><rect x="762.3" y="399.8" width="5.4" height="1.6" fill="#ddd"/><rect x="762.3" y="402.5" width="5.4" height="1.4" fill="#333"/><rect x="762.3" y="405" width="5.4" height="1" fill="#ccc"/><rect x="762.3" y="408" width="5.4" height="12.5" fill="#6e6e6e"/></g>
<g><path d="M836 391 L840 386.3 H851.6 L847.6 391 Z" fill="#d8d8d8" stroke="#555" stroke-width="0.5"/><path d="M847.6 391 L851.6 386.3 V419.6 L847.6 424.6 Z" fill="#a8a8a8" stroke="#555" stroke-width="0.5"/><rect x="836" y="391" width="11.6" height="33.6" fill="#ececec" stroke="#333" stroke-width="0.7"/><rect x="837" y="392.5" width="9.6" height="5" fill="#1a1a3a"/><rect x="837" y="398.6" width="9.6" height="2.4" fill="#333"/><rect x="837" y="402" width="9.6" height="3" fill="#222a6a"/><rect x="837" y="406" width="9.6" height="2" fill="#fff"/><rect x="837" y="409" width="9.6" height="3" fill="#444"/><rect x="837" y="413" width="9.6" height="2.6" fill="#888"/><rect x="837" y="416.6" width="9.6" height="3" fill="#aaa"/><rect x="837" y="420.4" width="9.6" height="3.2" fill="#999"/></g>
<use href="#pc" x="438.5" y="461" width="32" height="20"/>
<use href="#pc" x="490.5" y="460" width="32" height="20"/>
<use href="#pc" x="439.5" y="511" width="32" height="20"/>
<use href="#pc" x="440" y="563" width="32" height="20"/>
<use href="#pc" x="484" y="574" width="32" height="20"/>
<use href="#pc" x="648.5" y="393.5" width="32" height="20"/>
<use href="#pc" x="695.5" y="393.5" width="32" height="20"/>
<use href="#pc" x="650" y="457.5" width="32" height="20"/>
<use href="#pc" x="877" y="396.5" width="32" height="20"/>
<use href="#pc" x="976" y="398" width="32" height="20"/>
<use href="#pc" x="888.5" y="455.5" width="32" height="20"/>
<use href="#pc" x="976" y="454.5" width="32" height="20"/>
<use href="#pc" x="454.5" y="631.5" width="32" height="20"/>
<use href="#pc" x="441" y="681" width="32" height="20"/>
<use href="#pc" x="505.5" y="692" width="32" height="20"/>
<use href="#pc" x="559.5" y="690.5" width="32" height="20"/>
<use href="#pc" x="615.5" y="690.5" width="32" height="20"/>
<use href="#pc" x="744" y="646" width="32" height="20"/>
<use href="#pc" x="745.5" y="684" width="32" height="20"/>
<use href="#pc" x="690" y="691.5" width="32" height="20"/>
<use href="#pc" x="810.5" y="629.5" width="32" height="20"/>
<use href="#pc" x="809" y="687" width="32" height="20"/>
<use href="#pc" x="858" y="687" width="32" height="20"/>
<use href="#pc" x="944.5" y="651" width="32" height="20"/>
<g font-family="Liberation Sans" font-size="7.6" fill="#3a3a3a" text-anchor="middle" style="opacity:0.999">
<text x="452" y="487.7">asu2</text>
<text x="508.2" y="486.2">asu1</text>
<text x="452" y="537.7">asu3</text>
<text x="454" y="589.7">asu4</text>
<text x="484" y="602.7">asu5</text>
<text x="527.8" y="599.7">sw2</text>
<text x="661" y="420.0">ok2</text>
<text x="708" y="420.0">ok3</text>
<text x="648" y="483.7">ok1</text>
<text x="765.5" y="430.7">serv1</text>
<text x="845" y="435.09999999999997">serv2</text>
<text x="842.8" y="365.0">modinet</text>
<text x="820.6" y="396.0">modpor</text>
<text x="820.5" y="411.2">modpit</text>
<text x="820.6" y="428.4">modpsk</text>
<text x="843.2" y="452.0">modmsc</text>
<text x="828.8" y="467.5">modnow</text>
<text x="843" y="481.2">sw1</text>
<text x="887.6" y="425.0">sbt1</text>
<text x="988" y="425.0">sbt4</text>
<text x="887" y="482.7">sbt2</text>
<text x="980" y="482.7">sbt3</text>
<text x="466.5" y="659.7">buh1</text>
<text x="452" y="708.7">buh2</text>
<text x="506.5" y="718.9000000000001">buh3</text>
<text x="560.8" y="717.2">buh4</text>
<text x="616.5" y="717.2">buh5</text>
<text x="757" y="674.2">econ3</text>
<text x="757.7" y="712.0">econ2</text>
<text x="690.8" y="718.7">econ1</text>
<text x="814" y="657.2">fin1</text>
<text x="807" y="714.7">fin2</text>
<text x="865.4" y="714.5">fin3</text>
<text x="892" y="635.7">sw3</text>
<text x="955.8" y="680.7">boss</text>
</g>
<g font-family="Liberation Sans" font-size="9.4" fill="#333" style="opacity:0.999">
<text x="482" y="524.6999999999999" textLength="26.6" lengthAdjust="spacingAndGlyphs">ОАСУ</text><path d="M482 526.6 H508.6" stroke="#444" stroke-width="0.8"/>
<text x="677.8" y="451.6" textLength="61.2" lengthAdjust="spacingAndGlyphs">Отдел кадров</text><path d="M677.8 453.5 H739" stroke="#444" stroke-width="0.8"/>
<text x="780" y="444.5" textLength="48.0" lengthAdjust="spacingAndGlyphs">Серверная</text><path d="M780 446.4 H828" stroke="#444" stroke-width="0.8"/>
<text x="932.5" y="448.7" textLength="23.0" lengthAdjust="spacingAndGlyphs">Сбыт</text><path d="M932.5 450.59999999999997 H955.5" stroke="#444" stroke-width="0.8"/>
<text x="539" y="645.8" textLength="55.0" lengthAdjust="spacingAndGlyphs">Бухгалтерия</text><path d="M539 647.7 H594" stroke="#444" stroke-width="0.8"/>
<text x="685.3" y="645.6999999999999" textLength="51.9" lengthAdjust="spacingAndGlyphs">Экон. отдел</text><path d="M685.3 647.6 H737.2" stroke="#444" stroke-width="0.8"/>
<text x="844" y="647.5" textLength="48.7" lengthAdjust="spacingAndGlyphs">Фин. отдел</text><path d="M844 649.4000000000001 H892.7" stroke="#444" stroke-width="0.8"/>
<text x="944" y="645.5999999999999" textLength="41.5" lengthAdjust="spacingAndGlyphs">Директор</text><path d="M944 647.5 H985.5" stroke="#444" stroke-width="0.8"/>
<text x="497.3" y="544.0" text-anchor="middle">к. 1</text>
<text x="708" y="477.0" text-anchor="middle">к. 8</text>
<text x="804" y="470.40000000000003" text-anchor="middle">к. 7</text>
<text x="944" y="470.5" text-anchor="middle">к. 6</text>
<text x="562.7" y="666.9" text-anchor="middle">к. 2</text>
<text x="710" y="668.5999999999999" text-anchor="middle">к. 3</text>
<text x="862.2" y="668.5999999999999" text-anchor="middle">к. 4</text>
</g>
<text x="652.5" y="558" font-family="Liberation Sans" font-size="14" font-weight="bold" fill="#111" textLength="138" lengthAdjust="spacingAndGlyphs">Центральный офис</text>
<rect x="1149" y="349" width="8" height="415" rx="4" fill="#d6d6d6"/><rect x="1149" y="349" width="8" height="112" rx="4" fill="#a0a0a0"/>
<path d="M1149.5 339.5 H1156.5 L1153 335 Z" fill="#c8c8c8"/><path d="M1149.5 773 H1156.5 L1153 777.5 Z" fill="#444"/>
<rect x="307" y="790" width="816" height="8" rx="4" fill="#d6d6d6"/><rect x="307" y="790" width="267" height="8" rx="4" fill="#a0a0a0"/>
<path d="M297.5 790.5 V797.5 L293 794 Z" fill="#c8c8c8"/><path d="M1132.5 790.5 V797.5 L1137 794 Z" fill="#444"/>
</svg>
<!-- /SHEET -->

<!-- RIGHT PANEL -->
<div class="a" style="left:1184px;top:280px;width:278px;height:532px;border:1px solid #b4b4b4;background:#fff"></div>
<div class="a" style="left:1321px;top:256px;width:137px;height:25px;border:1px solid #b4b4b4;border-radius:0 4px 0 0;background:#ececec"></div>
<div class="a" style="left:1183px;top:254px;width:139px;height:27px;border:1px solid #b4b4b4;border-bottom:none;background:#fff"></div>
<svg class="a" style="left:1191px;top:259px" width="16" height="14" viewBox="0 0 16 14"><path d="M0.5 3 H2.5 V13.5 H0.5 Z" fill="#c8c8c8" stroke="#777" stroke-width="0.6"/><rect x="1" y="5" width="1" height="1" fill="#2c2"/><path d="M3 0.5 H15.5 V10.5 H3 Z" fill="#0a0a8a" stroke="#222" stroke-width="0.8"/><path d="M4 1.5 H14.5 V9.5 H4 Z" fill="#1038d8"/><path d="M4 1.5 H10 L6 9.5 H4 Z" fill="#3a6cff"/><path d="M7.5 10.5 H11 V12.5 H7.5 Z" fill="#555"/><path d="M5 12.5 H13.5 V13.8 H5 Z" fill="#333"/></svg>
<div class="t" style="left:1214px;top:260px;font-size:13px;color:#222;letter-spacing:-0.05px">Места хранения</div>
<svg class="a" style="left:1332px;top:258px" width="13" height="16" viewBox="0 0 13 16"><rect x="0.5" y="0.5" width="12" height="15" fill="#f4f4ec" stroke="#666"/><path d="M0.5 4.2 H12.5 M0.5 8 H12.5 M0.5 11.8 H12.5" stroke="#666" stroke-width="0.8"/><path d="M6 2.4 H11 M6 6.2 H11 M6 10 H11 M6 13.8 H11" stroke="#2fae2f" stroke-width="1.6"/><path d="M2 2.4 H4.5 M2 6.2 H4.5 M2 10 H4.5 M2 13.8 H4.5" stroke="#888" stroke-width="1" stroke-dasharray="0.8 0.6"/></svg>
<div class="t" style="left:1353px;top:260px;font-size:13px;color:#222">Карточки ном...</div>
<div class="btn" style="left:1193px;top:289px;width:84px;height:26px"></div>
<div class="t" style="left:1207px;top:296px;font-size:13px;color:#222;letter-spacing:-0.1px">Добавить</div>
<div class="btn" style="left:1297px;top:289px;width:60px;height:26px"></div>
<div class="a" style="left:1327px;top:290px;width:1px;height:24px;background:#c4c4c4"></div>
<svg class="a" style="left:1306px;top:296px" width="12" height="13" viewBox="0 0 12 13"><path d="M6 0.6 L11.4 6.4 H8.4 V12 H3.6 V6.4 H0.6 Z" fill="#2f93e6" stroke="#1a6fc0" stroke-width="0.8"/></svg>
<svg class="a" style="left:1334.5px;top:296px" width="12" height="13" viewBox="0 0 12 13"><path d="M6 12.4 L11.4 6.6 H8.4 V1 H3.6 V6.6 H0.6 Z" fill="#2f93e6" stroke="#1a6fc0" stroke-width="0.8"/></svg>
<div class="btn" style="left:1390px;top:289px;width:61px;height:26px"></div>
<div class="t" style="left:1404px;top:296px;font-size:13px;color:#222">Еще</div>
<svg class="a" style="left:1437px;top:301px" width="7" height="4" viewBox="0 0 7 4"><path d="M0.6 0.4 H6.4 L3.5 3.4 Z" fill="#333"/></svg>
<!-- table -->
<div class="a" style="left:1193px;top:324px;width:258px;height:442px;border:1px solid #a8a8a8;background:#fff"></div>
<div class="a" style="left:1194px;top:325px;width:256px;height:30px;background:#f2f2f2;border-bottom:1px solid #dcdcdc"></div>
<div class="a" style="left:1280px;top:325px;width:1px;height:30px;background:#dcdcdc"></div>
<div class="t" style="left:1202px;top:333px;font-size:13px;color:#444">N</div>
<div class="t" style="left:1289px;top:333px;font-size:13px;color:#444;letter-spacing:-0.05px">Место хранения</div>
<div class="a" style="left:1194px;top:357px;width:86px;height:26px;background:#c6c6c6"></div>
<div class="t" style="left:1264px;top:364px;font-size:13px;color:#222">1</div>
<div class="a" style="left:1281px;top:357px;width:170px;height:26px;background:#808080;border:2px solid #000"></div>
<div class="t" style="left:1289px;top:364px;font-size:13px;color:#2a2a2a;letter-spacing:-0.1px">ИТ-отдел (Васильев Пе...</div>
<div class="a" style="left:1194px;top:383px;width:256px;height:1px;background:#e4e4e4"></div>
<div class="btn" style="left:1193px;top:775px;width:205px;height:26px"></div>
<svg class="a" style="left:1200px;top:782px" width="16" height="14" viewBox="0 0 16 14"><path d="M0.5 3 H2.5 V13.5 H0.5 Z" fill="#c8c8c8" stroke="#777" stroke-width="0.6"/><rect x="1" y="5" width="1" height="1" fill="#2c2"/><path d="M3 0.5 H15.5 V10.5 H3 Z" fill="#0a0a8a" stroke="#222" stroke-width="0.8"/><path d="M4 1.5 H14.5 V9.5 H4 Z" fill="#1038d8"/><path d="M4 1.5 H10 L6 9.5 H4 Z" fill="#3a6cff"/><path d="M7.5 10.5 H11 V12.5 H7.5 Z" fill="#555"/><path d="M5 12.5 H13.5 V13.8 H5 Z" fill="#333"/></svg>
<div class="t" style="left:1223px;top:782px;font-size:13px;color:#222;letter-spacing:-0.1px">Назначить место хранения</div>
<div class="btn" style="left:1407px;top:775px;width:30px;height:26px"></div>
<svg class="a" style="left:1414px;top:780px" width="16" height="16" viewBox="0 0 16 16"><circle cx="8" cy="8" r="7.6" fill="#e8483a"/><circle cx="8" cy="8" r="7.1" fill="none" stroke="#c0281c" stroke-width="0.8"/><path d="M8 0.8 A7.2 7.2 0 0 1 15.2 8 H0.8 A7.2 7.2 0 0 1 8 0.8 Z" fill="#f4705f" opacity="0.55"/><path d="M5.2 5.2 L10.8 10.8 M10.8 5.2 L5.2 10.8" stroke="#fff" stroke-width="1.9" stroke-linecap="round"/></svg>
<!-- dotted line -->
<div class="a" style="left:1176px;top:254px;width:1px;height:566px;border-left:1px dashed #c8c8c8"></div>
<!-- RED RECT + ARROW -->
<svg class="a" style="left:0;top:0;z-index:20" width="1482" height="825" viewBox="0 0 1482 825">
<rect x="1181.7" y="254.8" width="288" height="566" rx="7" fill="none" stroke="#000" stroke-opacity="0.22" stroke-width="5"/>
<rect x="1180.6" y="253.8" width="288" height="566" rx="7" fill="none" stroke="#e53a35" stroke-width="5.2"/>
<path d="M1071.3 432.3 L1077.7 414.3 Q1078.3 413.3 1079 414.6 L1081.2 420.3 L1166.3 371 Q1168.6 370.4 1168.9 372.4 Q1169 373.4 1168.2 373.9 L1087 428.8 L1091 434 Q1091.6 435.4 1090.3 435.5 Z" fill="#000" opacity="0.28"/>
<path d="M1070.1 431.1 L1076.5 413.1 Q1077.1 412.1 1077.8 413.4 L1080 419.1 L1165.1 369.8 Q1167.4 369.2 1167.7 371.2 Q1167.8 372.2 1167 372.7 L1085.8 427.6 L1089.8 432.8 Q1090.4 434.2 1089.1 434.3 Z" fill="#e53a35"/>
</svg>

<div class="a" style="left:259px;top:32px;width:1px;height:793px;background:#000"></div>
<div class="a" style="left:0;top:383px;width:259px;height:1px;background:#111"></div>
<!-- window border -->
<div class="a" style="left:0;top:0;width:1482px;height:825px;border:1px solid #000;z-index:50;pointer-events:none"></div>
</body></html>
